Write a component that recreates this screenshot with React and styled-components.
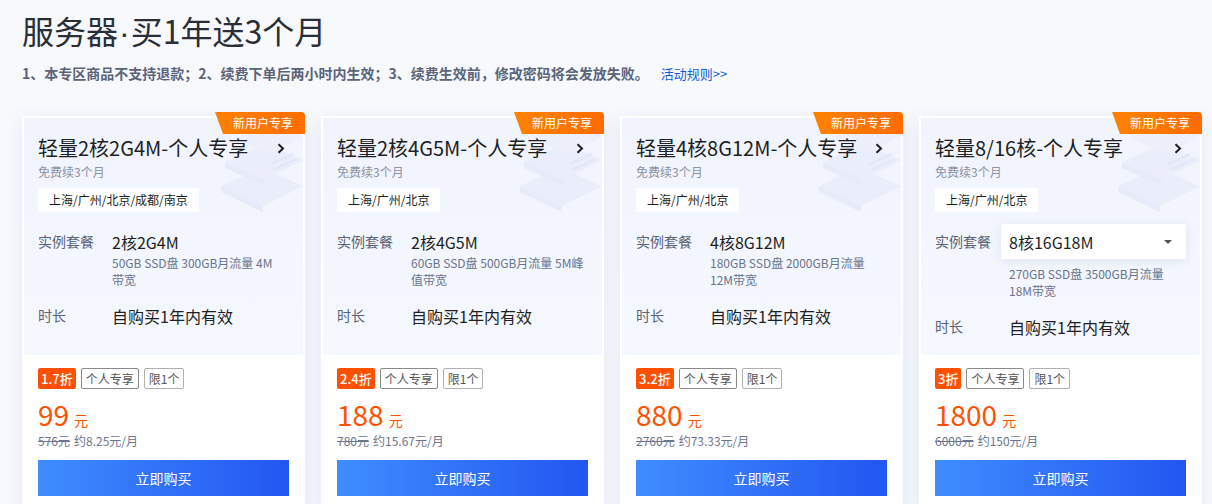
import styled, { createGlobalStyle } from "styled-components";

const GlobalStyle = createGlobalStyle`
  body {
    margin: 0;
    background: #f8f9fd;
    font-family: "Noto Sans CJK SC", "Noto Sans", sans-serif;
  }
`;

const Page = styled.div`
  padding: 10px 10px 0 22px;
`;

const Title = styled.h1`
  margin: 0;
  font-size: 32px;
  line-height: 40px;
  font-weight: 400;
  color: #2a2e36;
`;

const Dot = styled.span`
  font-family: "Liberation Sans", sans-serif;
  margin: 0 1px;
`;

const Notice = styled.p`
  margin: 11px 0 0;
  font-size: 14px;
  line-height: 18px;
  font-weight: 700;
  color: #5b6479;
  a {
    margin-left: 12px;
    font-size: 13px;
    font-weight: 400;
    color: #0f5bd8;
    text-decoration: none;
  }
`;

const CardList = styled.div`
  display: flex;
  gap: 16px;
  margin-top: 33px;
`;

const Card = styled.div`
  position: relative;
  flex: 0 0 283px;
  box-sizing: border-box;
  border: 2px solid #fff;
  background: #fff;
  box-shadow: 0 4px 18px rgba(50, 90, 170, 0.1);
`;

const Badge = styled.div`
  position: absolute;
  top: -6px;
  right: -2px;
  width: 90px;
  height: 22px;
  line-height: 22px;
  padding-left: 18px;
  box-sizing: border-box;
  font-size: 12px;
  color: #fff;
  background: linear-gradient(90deg, #ff8200, #ff6c00);
  border-top-right-radius: 4px;
  clip-path: polygon(0 0, 100% 0, 100% 100%, 8px 100%);
  z-index: 2;
`;

const Deco = styled.svg`
  position: absolute;
  top: 6px;
  right: 0;
  z-index: 0;
  opacity: 0.55;
`;

const Top = styled.div`
  position: relative;
  height: 237px;
  box-sizing: border-box;
  padding: 16px 14px 0;
  background: linear-gradient(180deg, #f1f4fd 0%, #f5f8fe 100%);
  overflow: hidden;
`;

const TopInner = styled.div`
  position: relative;
  z-index: 1;
`;

const NameRow = styled.div`
  display: flex;
  align-items: center;
  justify-content: space-between;
`;

const Name = styled.div`
  font-size: 20px;
  line-height: 28px;
  color: #1d1f24;
`;

const Chevron = styled.svg`
  margin-right: 4px;
`;

const Sub = styled.div`
  margin-top: 1px;
  font-size: 12px;
  line-height: 18px;
  color: #8a92a6;
`;

const Region = styled.div`
  display: inline-block;
  margin-top: 7px;
  height: 24px;
  line-height: 24px;
  padding: 0 11px;
  background: #fff;
  border-radius: 2px;
  font-size: 12px;
  color: #1d1f24;
`;

const Row = styled.div`
  display: flex;
  margin-top: ${(p) => p.$gap}px;
`;

const Label = styled.div`
  width: 66px;
  flex-shrink: 0;
  font-size: 14px;
  line-height: 35px;
  color: #5a6378;
`;

const ValueCol = styled.div`
  flex: 1;
  min-width: 0;
`;

const Value = styled.div`
  padding: 6px 0 0 8px;
  font-size: 16px;
  line-height: 24px;
  color: #1d1f24;
`;

const Select = styled.div`
  display: flex;
  align-items: center;
  justify-content: space-between;
  height: 35px;
  padding: 0 14px 0 8px;
  background: #fff;
  box-shadow: 0 2px 10px rgba(40, 70, 140, 0.1);
  font-size: 16px;
  color: #1d1f24;
`;

const Caret = styled.span`
  width: 0;
  height: 0;
  border-left: 4px solid transparent;
  border-right: 4px solid transparent;
  border-top: 4px solid #555;
`;

const Desc = styled.div`
  margin-top: ${(p) => (p.$select ? 6 : 0)}px;
  padding: 0 3px 0 8px;
  font-size: 12px;
  line-height: 17px;
  color: #6a7390;
`;

const Bottom = styled.div`
  padding: 13px 14px 16px;
  background: #fff;
`;

const Tags = styled.div`
  display: flex;
  gap: 5px;
`;

const Tag = styled.span`
  height: 21px;
  line-height: 19px;
  padding: 0 4px;
  box-sizing: border-box;
  border: 1px solid ${(p) => p.$border};
  border-radius: 2px;
  font-size: 12px;
  color: #555;
`;

const Discount = styled.span`
  height: 21px;
  line-height: 21px;
  padding: 0 3px;
  border-radius: 2px;
  background: #ff5000;
  color: #fff;
  font-size: 13px;
  font-weight: 500;
`;

const Price = styled.div`
  display: flex;
  align-items: baseline;
  height: 36px;
  margin-top: 7px;
  line-height: 36px;
  font-size: 28px;
  color: #ff5200;
  small {
    margin-left: 5px;
    font-size: 14px;
    line-height: 1;
  }
`;

const OldPrice = styled.div`
  font-size: 12px;
  line-height: 18px;
  color: #6c7590;
  s {
    margin-right: 4px;
  }
`;

const BuyButton = styled.button`
  display: block;
  width: 100%;
  height: 36px;
  margin-top: 10px;
  border: none;
  background: linear-gradient(90deg, #3f8dff, #2356f1);
  color: #fff;
  font-family: inherit;
  font-size: 14px;
  cursor: pointer;
`;

const cards = [
  {
    name: "轻量2核2G4M-个人专享",
    regions: "上海/广州/北京/成都/南京",
    spec: "2核2G4M",
    desc: "50GB SSD盘 300GB月流量 4M 带宽",
    off: "1.7折",
    price: "99",
    old: "576元",
    month: "约8.25元/月",
  },
  {
    name: "轻量2核4G5M-个人专享",
    regions: "上海/广州/北京",
    spec: "2核4G5M",
    desc: "60GB SSD盘 500GB月流量 5M峰值带宽",
    off: "2.4折",
    price: "188",
    old: "780元",
    month: "约15.67元/月",
  },
  {
    name: "轻量4核8G12M-个人专享",
    regions: "上海/广州/北京",
    spec: "4核8G12M",
    desc: "180GB SSD盘 2000GB月流量 12M带宽",
    off: "3.2折",
    price: "880",
    old: "2760元",
    month: "约73.33元/月",
  },
  {
    name: "轻量8/16核-个人专享",
    regions: "上海/广州/北京",
    spec: "8核16G18M",
    desc: "270GB SSD盘 3500GB月流量 18M带宽",
    off: "3折",
    price: "1800",
    old: "6000元",
    month: "约150元/月",
    select: true,
  },
];

function Decoration() {
  return (
    <Deco width="92" height="90" viewBox="0 0 92 90">
      <path d="M10 62 L50 44 L92 62 L52 82 Z" fill="#e4e8f8" />
      <path d="M10 62 L52 82 L52 88 L10 68 Z" fill="#dde2f6" />
      <path d="M14 38 L54 20 L92 36 L54 56 Z" fill="#e6e9f9" />
      <path d="M14 38 L54 56 L54 62 L14 44 Z" fill="#dde2f6" />
      <path d="M60 40 L82 30" stroke="#d6dcf4" strokeWidth="2" />
      <path d="M62 46 L86 35" stroke="#d6dcf4" strokeWidth="2" />
      <path d="M22 14 L58 0 L92 12 L58 30 Z" fill="#eaedfa" />
    </Deco>
  );
}

function ProductCard({ item }) {
  return (
    <Card>
      <Badge>新用户专享</Badge>
      <Top>
        <Decoration />
        <TopInner>
          <NameRow>
            <Name>{item.name}</Name>
            <Chevron width="8" height="11" viewBox="0 0 8 11">
              <polyline
                points="1.5,1.2 6,5.5 1.5,9.8"
                fill="none"
                stroke="#1d1f24"
                strokeWidth="2"
              />
            </Chevron>
          </NameRow>
          <Sub>免费续3个月</Sub>
          <Region>{item.regions}</Region>
          <Row $gap={12}>
            <Label>实例套餐</Label>
            <ValueCol>
              {item.select ? (
                <Select>
                  {item.spec}
                  <Caret />
                </Select>
              ) : (
                <Value>{item.spec}</Value>
              )}
              <Desc $select={item.select}>{item.desc}</Desc>
            </ValueCol>
          </Row>
          <Row $gap={10}>
            <Label>时长</Label>
            <ValueCol>
              <Value>自购买1年内有效</Value>
            </ValueCol>
          </Row>
        </TopInner>
      </Top>
      <Bottom>
        <Tags>
          <Discount>{item.off}</Discount>
          <Tag $border="#8a8a8a">个人专享</Tag>
          <Tag $border="#b0b0b0">限1个</Tag>
        </Tags>
        <Price>
          {item.price}
          <small>元</small>
        </Price>
        <OldPrice>
          <s>{item.old}</s>
          {item.month}
        </OldPrice>
        <BuyButton>立即购买</BuyButton>
      </Bottom>
    </Card>
  );
}

export default function App() {
  return (
    <Page>
      <GlobalStyle />
      <Title>
        服务器<Dot>·</Dot>买1年送3个月
      </Title>
      <Notice>
        1、本专区商品不支持退款；2、续费下单后两小时内生效；3、续费生效前，修改密码将会发放失败。
        <a href="#">活动规则&gt;&gt;</a>
      </Notice>
      <CardList>
        {cards.map((item) => (
          <ProductCard key={item.name} item={item} />
        ))}
      </CardList>
    </Page>
  );
}
